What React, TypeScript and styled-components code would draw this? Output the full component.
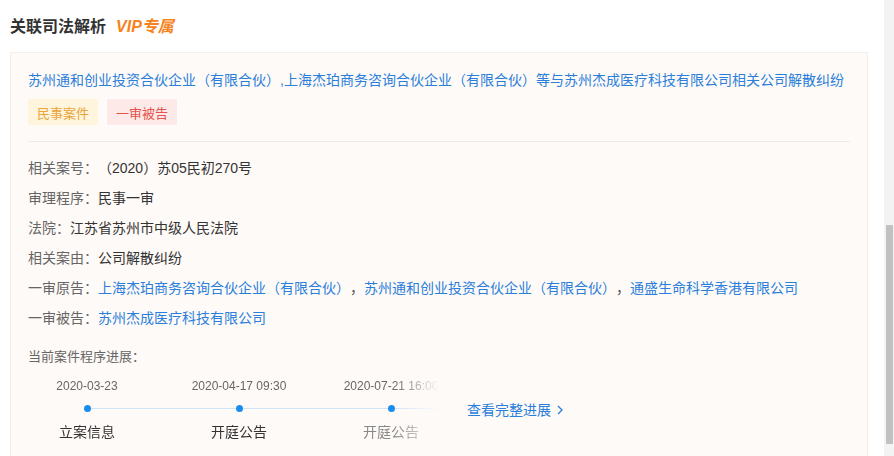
import React from "react";
import styled, { createGlobalStyle } from "styled-components";

const Global = createGlobalStyle`
  html, body { margin: 0; padding: 0; background: #fff; }
  body {
    font-family: "Liberation Sans", "Noto Sans CJK SC", sans-serif;
    color: #333;
    overflow: hidden;
    text-spacing-trim: space-all;
  }
`;

const Page = styled.div`
  display: flex;
  width: 894px;
  height: 456px;
  overflow: hidden;
`;

const Main = styled.div`
  flex: 1;
  padding: 17px 16px 0 10px;
  min-width: 0;
`;

const Heading = styled.div`
  display: flex;
  align-items: center;
  height: 20px;
  margin-bottom: 15px;
`;

const HeadingText = styled.span`
  font-size: 16px;
  font-weight: 700;
  color: #333;
  line-height: 20px;
`;

const Vip = styled.span`
  margin-left: 10px;
  font-size: 16px;
  font-weight: 700;
  font-style: italic;
  color: #f7821b;
  line-height: 20px;
`;

const Card = styled.div`
  background: #fefaf7;
  border: 1px solid #f5eee8;
  padding: 16px 17px 24px 17px;
`;

const CaseTitle = styled.div`
  font-size: 14px;
  line-height: 22px;
  color: #2b7fdb;
  white-space: nowrap;
`;

const Tags = styled.div`
  display: flex;
  gap: 9px;
  margin-top: 8px;
`;

const Tag = styled.span<{ $tone: "gold" | "red" }>`
  display: inline-flex;
  align-items: center;
  height: 26px;
  padding: 0 9px;
  font-size: 13px;
  border-radius: 2px;
  background: ${(p) => (p.$tone === "gold" ? "#fff4dc" : "#fde9e8")};
  color: ${(p) => (p.$tone === "gold" ? "#e9a53b" : "#e2544c")};
`;

const Divider = styled.div`
  height: 1px;
  background: #f2ebe5;
  margin: 16px 0 11px 0;
`;

const InfoRow = styled.div`
  font-size: 14px;
  line-height: 30px;
  color: #333;
  white-space: nowrap;
`;

const Label = styled.span`
  color: #666;
`;

const Link = styled.span`
  color: #2b7fdb;
`;

const Sep = styled.span`
  color: #555;
`;

const ProgressTitle = styled.div`
  margin-top: 14px;
  font-size: 13px;
  line-height: 20px;
  color: #666;
`;

const ProgressArea = styled.div`
  display: flex;
  align-items: center;
  margin-left: -17px;
  margin-top: 10px;
`;

const Timeline = styled.div`
  display: grid;
  grid-template-columns: repeat(3, 152px);
  -webkit-mask-image: linear-gradient(to right, #000 0, #000 382px, transparent 428px);
  mask-image: linear-gradient(to right, #000 0, #000 382px, transparent 428px);
`;

const Step = styled.div`
  display: flex;
  flex-direction: column;
  align-items: center;
`;

const StepDate = styled.div`
  font-size: 12px;
  line-height: 18px;
  color: #666;
  white-space: nowrap;
`;

const DotRow = styled.div<{ $first?: boolean }>`
  display: flex;
  align-items: center;
  width: 100%;
  height: 14px;
  margin-top: 6px;
  &::before,
  &::after {
    content: "";
    flex: 1;
    height: 1px;
    background: #cfe3f6;
  }
  &::before {
    background: ${(p) => (p.$first ? "transparent" : "#cfe3f6")};
  }
`;

const Dot = styled.span`
  width: 7px;
  height: 7px;
  border-radius: 50%;
  background: #1a8cf0;
`;

const StepLabel = styled.div<{ $muted?: boolean }>`
  margin-top: 7px;
  font-size: 14px;
  line-height: 20px;
  color: ${(p) => (p.$muted ? "#888" : "#333")};
`;

const More = styled.span`
  display: inline-flex;
  align-items: center;
  gap: 6px;
  margin-left: 0;
  font-size: 14px;
  line-height: 20px;
  color: #2b7fdb;
  white-space: nowrap;
`;

const ScrollTrack = styled.div`
  width: 10px;
  height: 456px;
  background: #f3f3f3;
  display: flex;
  justify-content: flex-end;
  padding-right: 1px;
  box-sizing: border-box;
`;

const ScrollThumb = styled.div`
  width: 7px;
  height: 219px;
  margin-top: 225px;
  background: #c1c1c1;
  border-radius: 1px;
`;

const steps = [
  { date: "2020-03-23", label: "立案信息" },
  { date: "2020-04-17 09:30", label: "开庭公告" },
  { date: "2020-07-21 16:00", label: "开庭公告", muted: true },
];

export default function App() {
  return (
    <>
      <Global />
      <Page>
        <Main>
          <Heading>
            <HeadingText>关联司法解析</HeadingText>
            <Vip>VIP专属</Vip>
          </Heading>
          <Card>
            <CaseTitle>
              苏州通和创业投资合伙企业（有限合伙）,上海杰珀商务咨询合伙企业（有限合伙）等与苏州杰成医疗科技有限公司相关公司解散纠纷
            </CaseTitle>
            <Tags>
              <Tag $tone="gold">民事案件</Tag>
              <Tag $tone="red">一审被告</Tag>
            </Tags>
            <Divider />
            <InfoRow>
              <Label>相关案号：</Label>（2020）苏05民初270号
            </InfoRow>
            <InfoRow>
              <Label>审理程序：</Label>民事一审
            </InfoRow>
            <InfoRow>
              <Label>法院：</Label>江苏省苏州市中级人民法院
            </InfoRow>
            <InfoRow>
              <Label>相关案由：</Label>公司解散纠纷
            </InfoRow>
            <InfoRow>
              <Label>一审原告：</Label>
              <Link>上海杰珀商务咨询合伙企业（有限合伙）</Link>
              <Sep>，</Sep>
              <Link>苏州通和创业投资合伙企业（有限合伙）</Link>
              <Sep>，</Sep>
              <Link>通盛生命科学香港有限公司</Link>
            </InfoRow>
            <InfoRow>
              <Label>一审被告：</Label>
              <Link>苏州杰成医疗科技有限公司</Link>
            </InfoRow>
            <ProgressTitle>当前案件程序进展：</ProgressTitle>
            <ProgressArea>
              <Timeline>
                {steps.map((s, i) => (
                  <Step key={i}>
                    <StepDate>{s.date}</StepDate>
                    <DotRow $first={i === 0}>
                      <Dot />
                    </DotRow>
                    <StepLabel $muted={s.muted}>{s.label}</StepLabel>
                  </Step>
                ))}
              </Timeline>
              <More>
                查看完整进展
                <svg width="6" height="10" viewBox="0 0 6 10" fill="none">
                  <polyline points="1,1 5,5 1,9" stroke="#2b7fdb" strokeWidth="1.3" />
                </svg>
              </More>
            </ProgressArea>
          </Card>
        </Main>
        <ScrollTrack>
          <ScrollThumb />
        </ScrollTrack>
      </Page>
    </>
  );
}
